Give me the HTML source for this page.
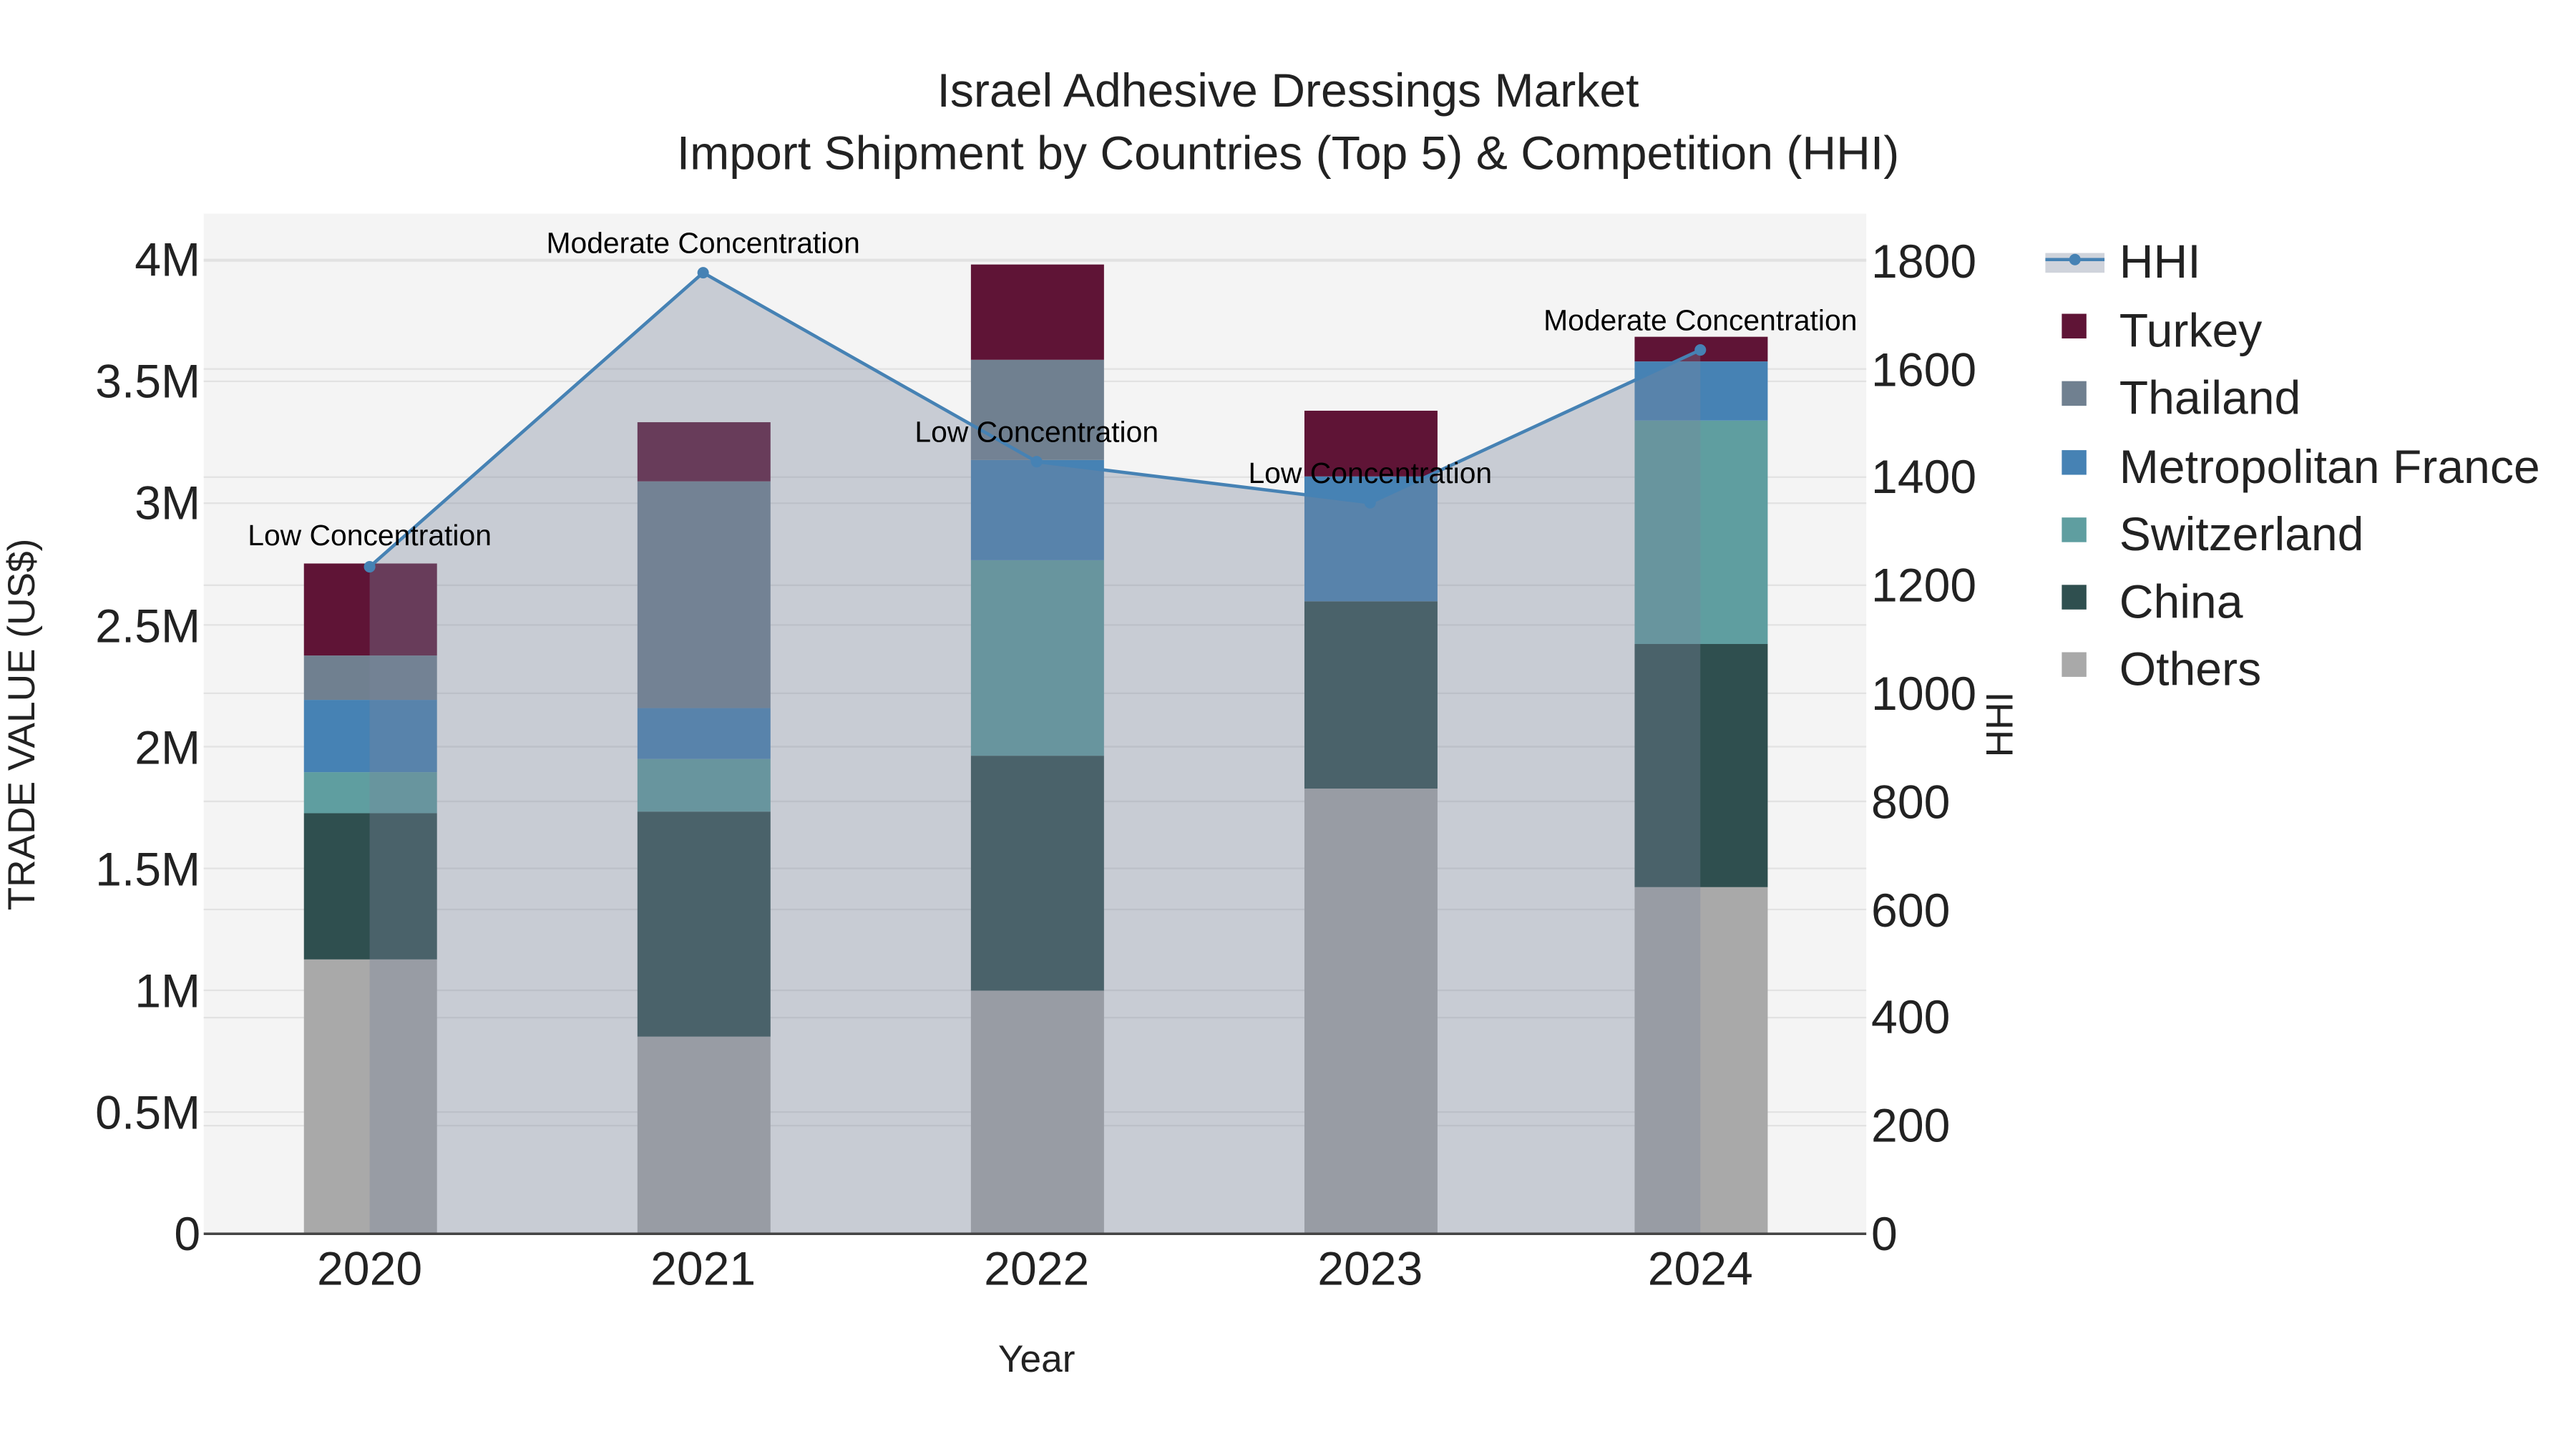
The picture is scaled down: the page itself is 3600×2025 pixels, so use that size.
<!DOCTYPE html>
<html><head><meta charset="utf-8"><style>
html,body{margin:0;padding:0;background:#fff;}
svg{display:block;font-family:"Liberation Sans",Arial,sans-serif;}
</style></head><body>
<svg width="3600" height="2025" viewBox="0 0 1568 882" preserveAspectRatio="none" xmlns="http://www.w3.org/2000/svg">
<rect x="0" y="0" width="1568" height="882" fill="#fff"/>
<rect x="124" y="130" width="1012" height="621" fill="#f4f4f4"/>
<g stroke="#e2e2e2" stroke-width="1">
<line x1="124" x2="1136" y1="676.9" y2="676.9"/>
<line x1="124" x2="1136" y1="602.8" y2="602.8"/>
<line x1="124" x2="1136" y1="528.6" y2="528.6"/>
<line x1="124" x2="1136" y1="454.5" y2="454.5"/>
<line x1="124" x2="1136" y1="380.4" y2="380.4"/>
<line x1="124" x2="1136" y1="306.3" y2="306.3"/>
<line x1="124" x2="1136" y1="232.1" y2="232.1"/>
<line x1="124" x2="1136" y1="158" y2="158"/>
<line x1="124" x2="1136" y1="685.2" y2="685.2"/>
<line x1="124" x2="1136" y1="619.4" y2="619.4"/>
<line x1="124" x2="1136" y1="553.6" y2="553.6"/>
<line x1="124" x2="1136" y1="487.8" y2="487.8"/>
<line x1="124" x2="1136" y1="422" y2="422"/>
<line x1="124" x2="1136" y1="356.2" y2="356.2"/>
<line x1="124" x2="1136" y1="290.4" y2="290.4"/>
<line x1="124" x2="1136" y1="224.6" y2="224.6"/>
<line x1="124" x2="1136" y1="158.8" y2="158.8"/>
</g>
<g>
<rect x="185" y="584" width="81" height="167" fill="#a9a9a9"/>
<rect x="185" y="495" width="81" height="89" fill="#2f4f4f"/>
<rect x="185" y="470" width="81" height="25" fill="#5f9ea0"/>
<rect x="185" y="426" width="81" height="44" fill="#4682b4"/>
<rect x="185" y="399" width="81" height="27" fill="#708090"/>
<rect x="185" y="343" width="81" height="56" fill="#5f1436"/>
<rect x="388" y="631" width="81" height="120" fill="#a9a9a9"/>
<rect x="388" y="494" width="81" height="137" fill="#2f4f4f"/>
<rect x="388" y="462" width="81" height="32" fill="#5f9ea0"/>
<rect x="388" y="431" width="81" height="31" fill="#4682b4"/>
<rect x="388" y="293" width="81" height="138" fill="#708090"/>
<rect x="388" y="257" width="81" height="36" fill="#5f1436"/>
<rect x="591" y="603" width="81" height="148" fill="#a9a9a9"/>
<rect x="591" y="460" width="81" height="143" fill="#2f4f4f"/>
<rect x="591" y="341" width="81" height="119" fill="#5f9ea0"/>
<rect x="591" y="280" width="81" height="61" fill="#4682b4"/>
<rect x="591" y="219" width="81" height="61" fill="#708090"/>
<rect x="591" y="161" width="81" height="58" fill="#5f1436"/>
<rect x="794" y="480" width="81" height="271" fill="#a9a9a9"/>
<rect x="794" y="366" width="81" height="114" fill="#2f4f4f"/>
<rect x="794" y="290" width="81" height="76" fill="#4682b4"/>
<rect x="794" y="250" width="81" height="40" fill="#5f1436"/>
<rect x="995" y="540" width="81" height="211" fill="#a9a9a9"/>
<rect x="995" y="392" width="81" height="148" fill="#2f4f4f"/>
<rect x="995" y="256" width="81" height="136" fill="#5f9ea0"/>
<rect x="995" y="220" width="81" height="36" fill="#4682b4"/>
<rect x="995" y="205" width="81" height="15" fill="#5f1436"/>
</g>
<polygon points="225,345 428,166 631,281 834,306 1035,213 1035,751 225,751" fill="rgba(122,133,155,0.36)"/>
<polyline points="225,345 428,166 631,281 834,306 1035,213" fill="none" stroke="#4682b4" stroke-width="2"/>
<g fill="#4682b4">
<circle cx="225" cy="345" r="3.5"/><circle cx="428" cy="166" r="3.5"/><circle cx="631" cy="281" r="3.5"/><circle cx="834" cy="306" r="3.5"/><circle cx="1035" cy="213" r="3.5"/>
</g>
<g font-size="17.8" fill="#000" text-anchor="middle">
<text x="225" y="332">Low Concentration</text>
<text x="428" y="154">Moderate Concentration</text>
<text x="631" y="269">Low Concentration</text>
<text x="834" y="294">Low Concentration</text>
<text x="1035" y="201">Moderate Concentration</text>
</g>
<line x1="124" x2="1136" y1="751" y2="751" stroke="#444" stroke-width="1.5"/>
<g font-size="28.8" fill="#222" text-anchor="end">
<text x="122" y="761">0</text>
<text x="122" y="687">0.5M</text>
<text x="122" y="613">1M</text>
<text x="122" y="539">1.5M</text>
<text x="122" y="465">2M</text>
<text x="122" y="391">2.5M</text>
<text x="122" y="316">3M</text>
<text x="122" y="242">3.5M</text>
<text x="122" y="168">4M</text>
</g>
<g font-size="28.8" fill="#222" text-anchor="start">
<text x="1139" y="761">0</text>
<text x="1139" y="695">200</text>
<text x="1139" y="629">400</text>
<text x="1139" y="564">600</text>
<text x="1139" y="498">800</text>
<text x="1139" y="432">1000</text>
<text x="1139" y="366">1200</text>
<text x="1139" y="300">1400</text>
<text x="1139" y="235">1600</text>
<text x="1139" y="169">1800</text>
</g>
<g font-size="28.8" fill="#222" text-anchor="middle">
<text x="225" y="782">2020</text>
<text x="428" y="782">2021</text>
<text x="631" y="782">2022</text>
<text x="834" y="782">2023</text>
<text x="1035" y="782">2024</text>
</g>
<text x="631" y="835" font-size="23.2" fill="#222" text-anchor="middle">Year</text>
<text transform="translate(21,441) rotate(-90)" font-size="23.2" fill="#222" text-anchor="middle">TRADE VALUE (US$)</text>
<text transform="translate(1225,441) rotate(-90)" font-size="23.2" fill="#222" text-anchor="middle">HHI</text>
<g font-size="28.8" fill="#222" text-anchor="middle">
<text x="784" y="65">Israel Adhesive Dressings Market</text>
<text x="784" y="103">Import Shipment by Countries (Top 5) &amp; Competition (HHI)</text>
</g>
<rect x="1245" y="154" width="36" height="12" fill="rgba(122,133,155,0.36)"/>
<line x1="1245" x2="1281" y1="158" y2="158" stroke="#4682b4" stroke-width="2"/>
<circle cx="1263" cy="158" r="3.5" fill="#4682b4"/>
<rect x="1255" y="191" width="15" height="15" fill="#5f1436"/>
<rect x="1255" y="232" width="15" height="15" fill="#708090"/>
<rect x="1255" y="274" width="15" height="15" fill="#4682b4"/>
<rect x="1255" y="315" width="15" height="15" fill="#5f9ea0"/>
<rect x="1255" y="356" width="15" height="15" fill="#2f4f4f"/>
<rect x="1255" y="397" width="15" height="15" fill="#a9a9a9"/>
<g font-size="28.8" fill="#222">
<text x="1290" y="169">HHI</text>
<text x="1290" y="211">Turkey</text>
<text x="1290" y="252">Thailand</text>
<text x="1290" y="294">Metropolitan France</text>
<text x="1290" y="335">Switzerland</text>
<text x="1290" y="376">China</text>
<text x="1290" y="417">Others</text>
</g>
</svg>
</body></html>
